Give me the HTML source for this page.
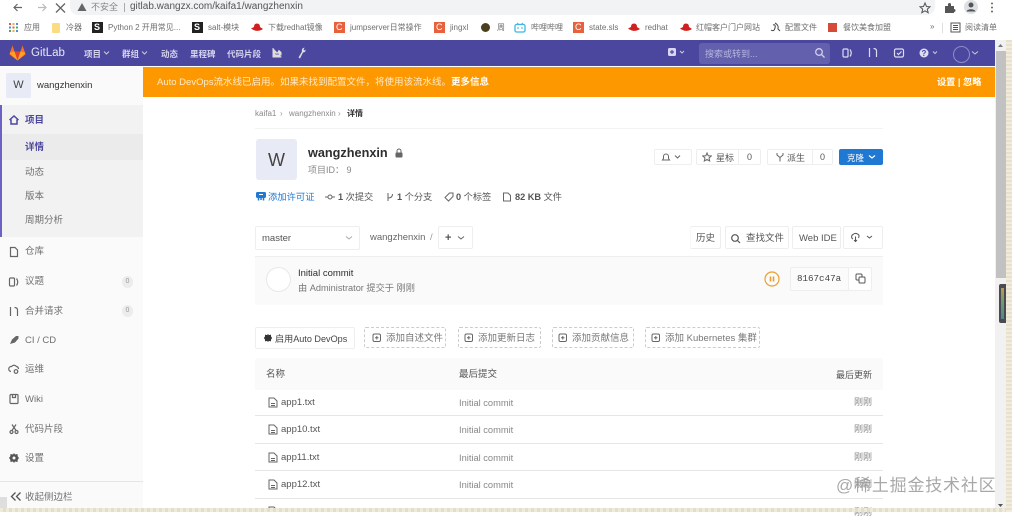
<!DOCTYPE html>
<html lang="zh"><head><meta charset="utf-8"><title>GitLab</title>
<style>
html,body{margin:0;padding:0;background:#fff}
body{width:1012px;height:512px;overflow:hidden;position:relative;font-family:"Liberation Sans","Noto Sans CJK SC",sans-serif;font-size:9px;color:#555;filter:blur(.3px)}
.a,.t,svg{position:absolute}
.t{white-space:nowrap;line-height:12px}
.bm{color:#555;font-size:8px;top:22px;opacity:.85}
.n{color:#d6d4ee;font-size:8.5px;top:48px;font-weight:bold}
.s{color:#707070;font-size:9.5px;left:25px}
.b{border:1px solid #eee;border-radius:2px;background:#fff;box-sizing:border-box}
.d{border:1px dashed #ccc;border-radius:2px;height:21px;top:327px;box-sizing:border-box}
.r{left:255px;width:628px;height:1px;background:#e5e5e5}
.f{left:281px;color:#555;font-size:9.5px}
.c{left:459px;color:#888;font-size:9.3px}
.w{right:140px;color:#888;font-size:9px}
.ic{fill:none;stroke:#666;stroke-width:1.2}
</style></head><body>

<!-- browser chrome -->
<div class="a" style="left:0;top:0;width:1012px;height:20px;background:#fff"></div>
<div class="a" style="left:70px;top:0;width:865px;height:15px;background:#f1f3f4;border-radius:0 0 8px 8px"></div>
<svg style="left:8px;top:1px" width="60" height="13" viewBox="0 0 60 13" fill="none" stroke="#666" stroke-width="1.2"><path d="M14 6.5H6M9.500 3L6 6.500L9.500 10"/><path d="M30 6.500H38M34.500 3L38 6.500L34.500 10" stroke="#bbb"/><path d="M48 2.500L57 11.500M57 2.500L48 11.500" stroke-width="1.300"/></svg>
<svg style="left:77px;top:2px" width="10" height="10" viewBox="0 0 10 10"><path d="M5 1L9.500 9H.5Z" fill="#666"/></svg>
<span class="t" style="left:91px;top:1px;font-size:9px;color:#888">不安全</span>
<div class="a" style="left:124px;top:3px;width:1px;height:9px;background:#aaa"></div>
<span class="t" style="left:130px;top:1px;font-size:10px;color:#555">gitlab.wangzx.com/kaifa1/wangzhenxin</span>
<svg style="left:918px;top:1px" width="14" height="14" viewBox="0 0 14 14"><path d="M7 2L8.500 5.500L12 5.800L9.300 8.200L10.200 11.700L7 9.800L3.800 11.700L4.700 8.200L2 5.800L5.500 5.500Z" fill="none" stroke="#555" stroke-width="1"/></svg>
<svg style="left:943px;top:1px" width="14" height="14" viewBox="0 0 14 14"><path d="M2 5H5V3.500A1.500 1.500 0 0 1 8 3.500V5H11V8A1.500 1.500 0 0 1 11 11V12H2Z" fill="#555"/></svg>
<div class="a" style="left:964px;top:0;width:14px;height:14px;border-radius:50%;background:#dde1e6"></div>
<svg style="left:964px;top:0" width="14" height="14" viewBox="0 0 14 14"><circle cx="7" cy="5" r="2.500" fill="#555"/><path d="M2.500 11.500C3 8.500 11 8.500 11.500 11.500Z" fill="#555"/></svg>
<svg style="left:990px;top:2px" width="4" height="11" viewBox="0 0 4 11"><circle cx="2" cy="1.500" r="1" fill="#666"/><circle cx="2" cy="5.500" r="1" fill="#666"/><circle cx="2" cy="9.500" r="1" fill="#666"/></svg>

<!-- bookmarks -->
<svg style="left:9px;top:23px" width="9" height="9" viewBox="0 0 9 9"><g><rect width="2" height="2" fill="#e8584a"/><rect x="3.500" width="2" height="2" fill="#f0b030"/><rect x="7" width="2" height="2" fill="#4a90e2"/><rect y="3.500" width="2" height="2" fill="#4a90e2"/><rect x="3.500" y="3.500" width="2" height="2" fill="#e8584a"/><rect x="7" y="3.500" width="2" height="2" fill="#50a860"/><rect y="7" width="2" height="2" fill="#50a860"/><rect x="3.500" y="7" width="2" height="2" fill="#f0b030"/><rect x="7" y="7" width="2" height="2" fill="#4a90e2"/></g></svg>
<span class="t bm" style="left:24px">应用</span>
<div class="a" style="left:52px;top:23px;width:8px;height:10px;background:#fbdc80;border-radius:1px"></div>
<span class="t bm" style="left:66px">冷器</span>
<div class="a" style="left:92px;top:22px;width:11px;height:11px;background:#222"></div><span class="t" style="left:94px;top:21px;color:#fff;font-size:9px;font-weight:bold">S</span>
<span class="t bm" style="left:108px">Python 2 开用常见...</span>
<div class="a" style="left:192px;top:22px;width:11px;height:11px;background:#222"></div><span class="t" style="left:194px;top:21px;color:#fff;font-size:9px;font-weight:bold">S</span>
<span class="t bm" style="left:208px">salt-模块</span>
<svg style="left:251px;top:23px" width="12" height="9" viewBox="0 0 12 9"><path d="M3 4Q3 .5 6 .5T9 4L12 6Q6 10 0 5.500Z" fill="#d02020"/></svg>
<span class="t bm" style="left:268px">下载redhat镜像</span>
<div class="a" style="left:334px;top:22px;width:11px;height:11px;background:#e8603c"></div><span class="t" style="left:336px;top:21px;color:#fff;font-size:9px">C</span>
<span class="t bm" style="left:350px">jumpserver日常操作</span>
<div class="a" style="left:434px;top:22px;width:11px;height:11px;background:#e8603c"></div><span class="t" style="left:436px;top:21px;color:#fff;font-size:9px">C</span>
<span class="t bm" style="left:450px">jingxl</span>
<div class="a" style="left:481px;top:23px;width:9px;height:9px;border-radius:50%;background:#4a4020"></div>
<span class="t bm" style="left:497px">周</span>
<svg style="left:514px;top:22px" width="12" height="11" viewBox="0 0 12 11"><rect x="1" y="2.500" width="10" height="7.500" rx="1.500" fill="none" stroke="#3cb8e8" stroke-width="1.300"/><path d="M3 1L5 2.500M9 1L7 2.500M4 5V7M8 5V7" stroke="#3cb8e8"/></svg>
<span class="t bm" style="left:531px">哔哩哔哩</span>
<div class="a" style="left:573px;top:22px;width:11px;height:11px;background:#e8603c"></div><span class="t" style="left:575px;top:21px;color:#fff;font-size:9px">C</span>
<span class="t bm" style="left:589px">state.sls</span>
<svg style="left:628px;top:23px" width="12" height="9" viewBox="0 0 12 9"><path d="M3 4Q3 .5 6 .5T9 4L12 6Q6 10 0 5.500Z" fill="#d02020"/></svg>
<span class="t bm" style="left:645px">redhat</span>
<svg style="left:680px;top:23px" width="12" height="9" viewBox="0 0 12 9"><path d="M3 4Q3 .5 6 .5T9 4L12 6Q6 10 0 5.500Z" fill="#d02020"/></svg>
<span class="t bm" style="left:696px">红帽客户门户网站</span>
<svg style="left:770px;top:22px" width="11" height="11" viewBox="0 0 11 11"><path d="M1 8Q4 10 5 6T3 3M5 1Q9 3 8 7L10 9" fill="none" stroke="#444"/></svg>
<span class="t bm" style="left:785px">配置文件</span>
<div class="a" style="left:828px;top:23px;width:9px;height:9px;background:#d84a38"></div>
<span class="t bm" style="left:843px">餐饮美食加盟</span>
<span class="t bm" style="left:930px;top:21px">»</span>
<div class="a" style="left:942px;top:23px;width:1px;height:10px;background:#ddd"></div>
<svg style="left:950px;top:22px" width="11" height="11" viewBox="0 0 11 11" fill="none" stroke="#555"><rect x="1" y="1" width="9" height="9"/><path d="M3 3.500H8M3 5.500H8M3 7.500H8"/></svg>
<span class="t bm" style="left:965px">阅读清单</span>

<!-- nav -->
<div class="a" style="left:0;top:40px;width:995px;height:26px;background:#4b479f"></div>
<svg style="left:9px;top:45px" width="17" height="16" viewBox="0 0 17 16"><path d="M8.500 15.500L.5 9.500L1 7.500L3.500 .5L5.500 6.500H11.500L13.500 .5L16 7.500L16.500 9.500Z" fill="#fc6d26"/><path d="M8.500 15.500L5.500 6.500H11.500Z" fill="#e24329"/><path d="M8.500 15.500L.8 8.500L1 7.500L5.500 6.500ZM8.500 15.500L16.200 8.500L16 7.500L11.500 6.500Z" fill="#fca326"/></svg>
<span class="t" style="left:31px;top:47px;color:#e8e7f4;font-size:11.500px">GitLab</span>
<span class="t n" style="left:84px">项目</span><svg style="left:103px;top:50px" width="7" height="6" viewBox="0 0 7 6"><path d="M1 1.500L3.500 4L6 1.500" fill="none" stroke="#ccc"/></svg>
<span class="t n" style="left:122px">群组</span><svg style="left:141px;top:50px" width="7" height="6" viewBox="0 0 7 6"><path d="M1 1.500L3.500 4L6 1.500" fill="none" stroke="#ccc"/></svg>
<span class="t n" style="left:161px">动态</span>
<span class="t n" style="left:190px">里程碑</span>
<span class="t n" style="left:227px">代码片段</span>
<svg style="left:272px;top:47px" width="10" height="11" viewBox="0 0 10 11"><path d="M1 1V10H9.500M3 8V5L5 6.500L7 3.500L9 5.500V8Z" fill="#ddd" stroke="#ddd"/></svg>
<svg style="left:296px;top:46px" width="11" height="13" viewBox="0 0 11 13"><path d="M2.500 11.500L6 5.500Q5 2.500 8.500 1.500L7.500 4L9.500 4.500L10 2.500Q10 6.500 7 6.500L4 12.500Z" fill="#ddd"/></svg>
<svg style="left:667px;top:47px" width="18" height="11" viewBox="0 0 18 11"><rect x="1" y="1" width="8" height="8" rx="1.500" fill="#d8d7ee"/><path d="M5 3V7M3 5H7" stroke="#4b479f" stroke-width="1.200"/><path d="M13 4L15 6L17 4" fill="none" stroke="#ccc"/></svg>
<div class="a" style="left:699px;top:43px;width:131px;height:21px;background:#6360ad;border-radius:3px"></div>
<span class="t" style="left:705px;top:48px;color:#b7b5de;font-size:9px">搜索或转到...</span>
<svg style="left:814px;top:47px" width="12" height="12" viewBox="0 0 12 12"><circle cx="5" cy="5" r="3.300" fill="none" stroke="#d2d1ea" stroke-width="1.300"/><path d="M7.500 7.500L10.500 10.500" stroke="#d2d1ea" stroke-width="1.300"/></svg>
<svg style="left:842px;top:47px" width="12" height="12" viewBox="0 0 12 12" fill="none" stroke="#dddcf0" stroke-width="1.200"><rect x="1" y="2" width="5" height="8" rx="1"/><path d="M8 2.500Q10.500 6 8 9.500"/></svg>
<svg style="left:867px;top:46px" width="12" height="13" viewBox="0 0 12 13" fill="none" stroke="#dddcf0" stroke-width="1.200"><path d="M2.500 2V11M9.500 11V5Q9.500 2.500 6.500 2.500"/></svg>
<svg style="left:893px;top:47px" width="12" height="12" viewBox="0 0 12 12" fill="none" stroke="#dddcf0" stroke-width="1.200"><rect x="1.500" y="2" width="9" height="8" rx="1.500"/><path d="M4 6L5.500 7.500L8.500 4.500"/></svg>
<svg style="left:918px;top:47px" width="22" height="12" viewBox="0 0 22 12"><circle cx="6" cy="6" r="4.500" fill="#dddcf0"/><text x="6" y="9" text-anchor="middle" font-size="8" font-weight="bold" font-family="Liberation Sans" fill="#4b479f">?</text><path d="M15 4.500L17 6.500L19 4.500" fill="none" stroke="#ccc"/></svg>
<div class="a" style="left:953px;top:46px;width:15px;height:15px;border:1px solid #8f8cc8;border-radius:50%"></div>
<svg style="left:971px;top:50px" width="8" height="6" viewBox="0 0 8 6"><path d="M1 1.500L4 4L7 1.500" fill="none" stroke="#ccc"/></svg>

<!-- banner -->
<div class="a" style="left:143px;top:67px;width:852px;height:30px;background:#fe9800"></div>
<span class="t" style="left:157px;top:76px;color:#ffeacb;font-size:9.500px;line-height:13px">Auto DevOps流水线已启用。如果未找到配置文件，将使用该流水线。</span>
<span class="t" style="left:451px;top:76px;color:#fff;font-size:9.500px;font-weight:bold;line-height:13px">更多信息</span>
<span class="t" style="left:937px;top:76px;color:#fff;font-size:9.200px;font-weight:bold;line-height:13px">设置 | 忽略</span>

<!-- sidebar -->
<div class="a" style="left:0;top:67px;width:143px;height:441px;background:#fafafa"></div>
<div class="a" style="left:6px;top:73px;width:25px;height:25px;background:#e8eaf6;border-radius:2px;text-align:center;font-size:11px;line-height:25px;color:#444">W</div>
<span class="t" style="left:37px;top:80px;color:#333;font-size:9.500px">wangzhenxin</span>
<div class="a" style="left:0;top:105px;width:143px;height:132px;background:#f2f2f2"></div>
<div class="a" style="left:0;top:134px;width:143px;height:26px;background:#ebebeb"></div>
<div class="a" style="left:0;top:105px;width:2px;height:132px;background:#6b62c4"></div>
<svg style="left:8px;top:114px" width="12" height="12" viewBox="0 0 12 12"><path d="M1.500 6L6 2L10.500 6M3 5.500V10H9V5.500" fill="none" stroke="#4b479f" stroke-width="1.500"/></svg>
<span class="t" style="left:25px;top:115px;color:#4b479f;font-size:9.500px;font-weight:bold">项目</span>
<span class="t" style="left:25px;top:142px;color:#4b479f;font-size:9.500px;font-weight:bold">详情</span>
<span class="t s" style="top:167px">动态</span>
<span class="t s" style="top:191px">版本</span>
<span class="t s" style="top:215px">周期分析</span>
<svg style="left:8px;top:246px" width="12" height="12" viewBox="0 0 12 12"><path class="ic" style="position:static" d="M2.500 1.500H7L9.500 4V10.500H2.500Z"/></svg>
<span class="t s" style="top:246px">仓库</span>
<svg style="left:8px;top:276px" width="12" height="12" viewBox="0 0 12 12" class="ic"><rect x="1.500" y="2" width="5" height="8" rx="1"/><path d="M8.500 2.500Q11 6 8.500 9.500"/></svg>
<span class="t s" style="top:276px">议题</span>
<div class="a" style="left:122px;top:276px;width:11px;height:12px;border-radius:6px;background:#ececec;color:#999;font-size:7px;line-height:12px;text-align:center">0</div>
<svg style="left:8px;top:305px" width="12" height="13" viewBox="0 0 12 13" class="ic"><path d="M2.500 2V11M9.500 11V5Q9.500 2.500 6.500 2.500"/></svg>
<span class="t s" style="top:306px">合并请求</span>
<div class="a" style="left:122px;top:305px;width:11px;height:12px;border-radius:6px;background:#ececec;color:#999;font-size:7px;line-height:12px;text-align:center">0</div>
<svg style="left:8px;top:334px" width="12" height="12" viewBox="0 0 12 12"><path d="M2 10L4 5.500L8 2H10.500V4.500L7 8.500Z" fill="#666"/></svg>
<span class="t s" style="top:335px">CI / CD</span>
<svg style="left:8px;top:363px" width="12" height="12" viewBox="0 0 12 12" class="ic"><path d="M3 8.500A2.500 2.500 0 0 1 3.500 3.500Q6 1 8.500 3.500Q10.500 4 10.500 6"/><circle cx="8" cy="8.500" r="1.800"/></svg>
<span class="t s" style="top:364px">运维</span>
<svg style="left:8px;top:393px" width="12" height="12" viewBox="0 0 12 12" class="ic"><rect x="2" y="1.500" width="8" height="9" rx="1"/><path d="M4.500 1.500V4.500H7.500V1.500"/></svg>
<span class="t s" style="top:394px">Wiki</span>
<svg style="left:8px;top:423px" width="12" height="12" viewBox="0 0 12 12" class="ic"><path d="M4 1.500L8 7.500M8 1.500L4 7.500"/><circle cx="3.500" cy="9" r="1.500"/><circle cx="8.500" cy="9" r="1.500"/></svg>
<span class="t s" style="top:424px">代码片段</span>
<svg style="left:8px;top:452px" width="12" height="12" viewBox="0 0 12 12"><path d="M6 1L7 2.500L9.500 2L9.700 4.300L11 6L9.700 7.700L9.500 10L7 9.500L6 11L5 9.500L2.500 10L2.300 7.700L1 6L2.300 4.300L2.500 2L5 2.500Z" fill="#555"/><circle cx="6" cy="6" r="1.500" fill="#fafafa"/></svg>
<span class="t s" style="top:453px">设置</span>
<div class="a" style="left:0;top:481px;width:143px;height:1px;background:#e5e5e5"></div>
<svg style="left:10px;top:491px" width="12" height="11" viewBox="0 0 12 11"><path d="M5.500 1.500L1.500 5.500L5.500 9.500M10.500 1.500L6.500 5.500L10.500 9.500" fill="none" stroke="#555" stroke-width="1.300"/></svg>
<span class="t s" style="top:492px">收起侧边栏</span>
<div class="a" style="left:0;top:497px;width:7px;height:11px;background:#dedede"></div>

<!-- breadcrumb -->
<span class="t" style="left:255px;top:108px;color:#888;font-size:8px">kaifa1</span>
<span class="t" style="left:280px;top:108px;color:#999;font-size:8px">›</span>
<span class="t" style="left:289px;top:108px;color:#888;font-size:8px">wangzhenxin</span>
<span class="t" style="left:338px;top:108px;color:#999;font-size:8px">›</span>
<span class="t" style="left:347px;top:108px;color:#333;font-size:8px;font-weight:bold">详情</span>
<div class="a" style="left:255px;top:128px;width:628px;height:1px;background:#f3f3f3"></div>

<!-- project header -->
<div class="a" style="left:256px;top:139px;width:41px;height:41px;background:#e8eaf6;border-radius:3px;text-align:center;line-height:42px;font-size:18px;color:#444">W</div>
<span class="t" style="left:308px;top:146px;color:#2e2e2e;font-size:12.700px;font-weight:bold;line-height:14px">wangzhenxin</span>
<svg style="left:394px;top:148px" width="10" height="10" viewBox="0 0 10 10"><rect x="1.500" y="4.500" width="7" height="5" rx="1" fill="#666"/><path d="M3 4.500V3A2 2 0 0 1 7 3V4.500" fill="none" stroke="#666"/></svg>
<span class="t" style="left:308px;top:164px;color:#888;font-size:9px">项目ID： 9</span>

<div class="a b" style="left:654px;top:149px;width:38px;height:16px"></div>
<svg style="left:661px;top:152px" width="26" height="10" viewBox="0 0 26 10" fill="none" stroke="#666"><path d="M1.500 8H8.500L7.500 6.500V4.500A2.500 2.500 0 0 0 2.500 4.500V6.500Z"/><path d="M14 3.500L16.500 6L19 3.500"/></svg>
<div class="a b" style="left:696px;top:149px;width:65px;height:16px"></div>
<div class="a" style="left:738px;top:150px;width:1px;height:14px;background:#eee"></div>
<svg style="left:702px;top:152px" width="10" height="10" viewBox="0 0 10 10"><path d="M5 1L6.200 3.800L9.200 4L7 6L7.700 9L5 7.500L2.300 9L3 6L.8 4L3.800 3.800Z" fill="none" stroke="#666"/></svg>
<span class="t" style="left:716px;top:152px;color:#555;font-size:9px">星标</span>
<span class="t" style="left:747px;top:151px;color:#555;font-size:9px">0</span>
<div class="a b" style="left:767px;top:149px;width:66px;height:16px"></div>
<div class="a" style="left:812px;top:150px;width:1px;height:14px;background:#eee"></div>
<svg style="left:775px;top:152px" width="10" height="10" viewBox="0 0 10 10" fill="none" stroke="#666"><path d="M2 1V3L5 5.500L8 3V1M5 5.500V9.500"/></svg>
<span class="t" style="left:787px;top:152px;color:#555;font-size:9px">派生</span>
<span class="t" style="left:820px;top:151px;color:#555;font-size:9px">0</span>
<div class="a" style="left:839px;top:149px;width:44px;height:16px;background:#1f78d1;border-radius:2px"></div>
<span class="t" style="left:847px;top:152px;color:#fff;font-size:8.500px">克隆</span>
<svg style="left:868px;top:154px" width="8" height="6" viewBox="0 0 8 6"><path d="M1 1.500L4 4L7 1.500" fill="none" stroke="#fff" stroke-width="1.200"/></svg>

<!-- stats -->
<svg style="left:256px;top:191px" width="10" height="10" viewBox="0 0 10 10"><rect x="0" y="1" width="10" height="6" rx="1.500" fill="#1f78d1"/><path d="M2.500 7V9.500M7.500 7V9.500M5 2V9" stroke="#1f78d1" stroke-width="1.500"/><path d="M3 3.500H7" stroke="#fff"/></svg>
<span class="t" style="left:268px;top:191px;color:#1f78d1;font-size:9.300px;line-height:13px">添加许可证</span>
<svg style="left:325px;top:192px" width="10" height="10" viewBox="0 0 10 10" fill="none" stroke="#666"><circle cx="5" cy="5" r="2"/><path d="M0 5H3M7 5H10"/></svg>
<span class="t" style="left:338px;top:191px;color:#555;font-size:9.200px;line-height:13px"><b>1</b> 次提交</span>
<svg style="left:385px;top:192px" width="10" height="10" viewBox="0 0 10 10" fill="none" stroke="#666"><path d="M3 1V9M3 6Q7.500 6 7.500 2"/></svg>
<span class="t" style="left:397px;top:191px;color:#555;font-size:9.200px;line-height:13px"><b>1</b> 个分支</span>
<svg style="left:444px;top:192px" width="10" height="10" viewBox="0 0 10 10" fill="none" stroke="#666"><path d="M1 5.500L5.500 1H9V4.500L4.500 9Z"/></svg>
<span class="t" style="left:456px;top:191px;color:#555;font-size:9.200px;line-height:13px"><b>0</b> 个标签</span>
<svg style="left:502px;top:192px" width="10" height="10" viewBox="0 0 10 10" fill="none" stroke="#666"><path d="M1.500 1H6L8.500 3.500V9H1.500Z"/></svg>
<span class="t" style="left:515px;top:191px;color:#555;font-size:9.200px;line-height:13px"><b>82 KB</b> 文件</span>

<!-- branch row -->
<div class="a b" style="left:255px;top:226px;width:105px;height:24px"></div>
<span class="t" style="left:262px;top:233px;color:#555;font-size:9.500px">master</span>
<svg style="left:345px;top:235px" width="8" height="6" viewBox="0 0 8 6"><path d="M1 1.500L4 4L7 1.500" fill="none" stroke="#aaa"/></svg>
<span class="t" style="left:370px;top:232px;color:#666;font-size:9.500px">wangzhenxin</span>
<span class="t" style="left:430px;top:232px;color:#999;font-size:9.500px">/</span>
<div class="a b" style="left:438px;top:226px;width:35px;height:23px"></div>
<span class="t" style="left:445px;top:232px;color:#555;font-size:11px;font-weight:bold">+</span>
<svg style="left:457px;top:235px" width="8" height="6" viewBox="0 0 8 6"><path d="M1 1.500L4 4L7 1.500" fill="none" stroke="#666"/></svg>

<div class="a b" style="left:690px;top:226px;width:31px;height:23px;border-left-color:#f8f8f8"></div>
<span class="t" style="left:696px;top:233px;color:#555;font-size:9.500px">历史</span>
<div class="a b" style="left:725px;top:226px;width:64px;height:23px"></div>
<svg style="left:730px;top:233px" width="11" height="11" viewBox="0 0 11 11" fill="none" stroke="#555" stroke-width="1.200"><circle cx="5" cy="5" r="3.300"/><path d="M7.500 7.500L10 10"/></svg>
<span class="t" style="left:746px;top:233px;color:#555;font-size:9.500px">查找文件</span>
<div class="a b" style="left:792px;top:226px;width:49px;height:23px"></div>
<span class="t" style="left:799px;top:233px;color:#555;font-size:9.500px">Web IDE</span>
<div class="a b" style="left:843px;top:226px;width:40px;height:23px"></div>
<svg style="left:850px;top:232px" width="26" height="11" viewBox="0 0 26 11" fill="none" stroke="#555"><path d="M3 7A2.500 2.500 0 0 1 3 2.500Q5 .5 7.500 2Q10 3 8.500 6M5.500 4.500V9.500M4 8L5.500 9.500L7 8"/><path d="M17 4L19.500 6L22 4"/></svg>

<!-- commit -->
<div class="a" style="left:255px;top:256px;width:628px;height:49px;background:#fafafa;border-top:1px solid #eee;box-sizing:border-box"></div>
<div class="a" style="left:266px;top:267px;width:25px;height:25px;border:1px solid #e8e8e8;border-radius:50%;background:#fff;box-sizing:border-box"></div>
<span class="t" style="left:298px;top:268px;color:#2e2e2e;font-size:9.500px">Initial commit</span>
<span class="t" style="left:298px;top:282px;color:#777;font-size:9.200px">由 Administrator 提交于 刚刚</span>
<svg style="left:764px;top:271px" width="16" height="16" viewBox="0 0 16 16"><circle cx="8" cy="8" r="7" fill="none" stroke="#e9a02c" stroke-width="1.200"/><path d="M6.500 5.500V10.500M9.500 5.500V10.500" stroke="#e9a02c" stroke-width="1.600"/></svg>
<div class="a b" style="left:790px;top:267px;width:59px;height:24px;background:#fbfbfb"></div>
<span class="t" style="left:797px;top:273px;color:#444;font-size:9.200px;font-family:'Liberation Mono',monospace">8167c47a</span>
<div class="a b" style="left:848px;top:267px;width:24px;height:24px"></div>
<svg style="left:855px;top:273px" width="11" height="11" viewBox="0 0 11 11" fill="none" stroke="#555"><rect x="1" y="1" width="6" height="6" rx="1"/><rect x="4" y="4" width="6" height="6" rx="1" fill="#fff"/></svg>

<!-- actions -->
<div class="a b" style="left:255px;top:327px;width:100px;height:22px"></div>
<svg style="left:263px;top:333px" width="10" height="10" viewBox="0 0 12 12"><path d="M6 1L7 2.500L9.500 2L9.700 4.300L11 6L9.700 7.700L9.500 10L7 9.500L6 11L5 9.500L2.500 10L2.300 7.700L1 6L2.300 4.300L2.500 2L5 2.500Z" fill="#333"/></svg>
<span class="t" style="left:275px;top:333px;color:#444;font-size:9.100px">启用Auto DevOps</span>
<div class="a d" style="left:364px;width:82px"></div>
<span class="t" style="left:386px;top:333px;color:#777;font-size:9.500px">添加自述文件</span>
<div class="a d" style="left:458px;width:83px"></div>
<span class="t" style="left:478px;top:333px;color:#777;font-size:9.500px">添加更新日志</span>
<div class="a d" style="left:552px;width:82px"></div>
<span class="t" style="left:572px;top:333px;color:#777;font-size:9.500px">添加贡献信息</span>
<div class="a d" style="left:645px;width:115px"></div>
<span class="t" style="left:665px;top:333px;color:#777;font-size:9.500px">添加 Kubernetes 集群</span>
<svg style="left:372px;top:333px" width="10" height="10" viewBox="0 0 10 10" fill="none" stroke="#666"><rect x="1" y="1" width="7.500" height="7.500" rx="1.500"/><path d="M4.800 3V6.500M3 4.800H6.500"/></svg>
<svg style="left:464px;top:333px" width="10" height="10" viewBox="0 0 10 10" fill="none" stroke="#666"><rect x="1" y="1" width="7.500" height="7.500" rx="1.500"/><path d="M4.800 3V6.500M3 4.800H6.500"/></svg>
<svg style="left:558px;top:333px" width="10" height="10" viewBox="0 0 10 10" fill="none" stroke="#666"><rect x="1" y="1" width="7.500" height="7.500" rx="1.500"/><path d="M4.800 3V6.500M3 4.800H6.500"/></svg>
<svg style="left:651px;top:333px" width="10" height="10" viewBox="0 0 10 10" fill="none" stroke="#666"><rect x="1" y="1" width="7.500" height="7.500" rx="1.500"/><path d="M4.800 3V6.500M3 4.800H6.500"/></svg>

<!-- table -->
<div class="a" style="left:255px;top:358px;width:628px;height:32px;background:#fafafa;border-radius:3px 3px 0 0"></div>
<span class="t" style="left:266px;top:369px;color:#555;font-size:9.500px">名称</span>
<span class="t" style="left:459px;top:369px;color:#555;font-size:9.500px">最后提交</span>
<span class="t" style="left:836px;top:369px;color:#555;font-size:9px">最后更新</span>

<svg style="left:268px;top:397px" width="10" height="11" viewBox="0 0 10 11" fill="none" stroke="#666"><path d="M1 1H6L9 4V10H1ZM3 6.500H7M3 8.500H7"/></svg>
<span class="t f" style="top:397px">app1.txt</span><span class="t c" style="top:397px">Initial commit</span><span class="t w" style="top:396px">刚刚</span>
<div class="a r" style="top:415px"></div>
<svg style="left:268px;top:424px" width="10" height="11" viewBox="0 0 10 11" fill="none" stroke="#666"><path d="M1 1H6L9 4V10H1ZM3 6.500H7M3 8.500H7"/></svg>
<span class="t f" style="top:424px">app10.txt</span><span class="t c" style="top:424px">Initial commit</span><span class="t w" style="top:423px">刚刚</span>
<div class="a r" style="top:443px"></div>
<svg style="left:268px;top:452px" width="10" height="11" viewBox="0 0 10 11" fill="none" stroke="#666"><path d="M1 1H6L9 4V10H1ZM3 6.500H7M3 8.500H7"/></svg>
<span class="t f" style="top:452px">app11.txt</span><span class="t c" style="top:452px">Initial commit</span><span class="t w" style="top:451px">刚刚</span>
<div class="a r" style="top:470px"></div>
<svg style="left:268px;top:479px" width="10" height="11" viewBox="0 0 10 11" fill="none" stroke="#666"><path d="M1 1H6L9 4V10H1ZM3 6.500H7M3 8.500H7"/></svg>
<span class="t f" style="top:479px">app12.txt</span><span class="t c" style="top:479px">Initial commit</span><span class="t w" style="top:478px">刚刚</span>
<div class="a r" style="top:498px"></div>
<svg style="left:268px;top:506px" width="10" height="6" viewBox="0 0 10 6" fill="none" stroke="#666"><path d="M1 6V1H6L9 4V6"/></svg>
<span class="t w" style="top:506px">刚刚</span>

<!-- scrollbar -->
<div class="a" style="left:995px;top:40px;width:11px;height:468px;background:#f1f1f1"></div>
<div class="a" style="left:996px;top:51px;width:10px;height:227px;background:#c1c1c1"></div>
<svg style="left:997px;top:43px" width="7" height="5" viewBox="0 0 7 5"><path d="M3.500 1L6 4H1Z" fill="#777"/></svg>
<svg style="left:997px;top:503px" width="7" height="5" viewBox="0 0 7 5"><path d="M3.500 4L6 1H1Z" fill="#555"/></svg>
<div class="a" style="left:999px;top:284px;width:7px;height:39px;background:#4a4a55;border-radius:2px 0 0 2px"></div>
<div class="a" style="left:1001px;top:288px;width:3px;height:31px;background:linear-gradient(#b89a50,#6a9a70,#4a8a90)"></div>

<!-- page edge -->
<div class="a" style="left:1006px;top:0;width:6px;height:512px;background:repeating-linear-gradient(0deg,#f1ecdc 0 2px,#e6e0cc 2px 4px)"></div>
<div class="a" style="left:0;top:508px;width:1006px;height:4px;background:repeating-linear-gradient(90deg,#efebda 0 3px,#e3decb 3px 6px)"></div>
<div class="a" style="left:1006px;top:0;width:6px;height:40px;background:#fff"></div>

<!-- watermark -->
<span class="t" style="left:836px;top:475px;color:#9a9a9a;font-size:17px;line-height:22px;letter-spacing:.8px;opacity:.85">@稀土掘金技术社区</span>
</body></html>
